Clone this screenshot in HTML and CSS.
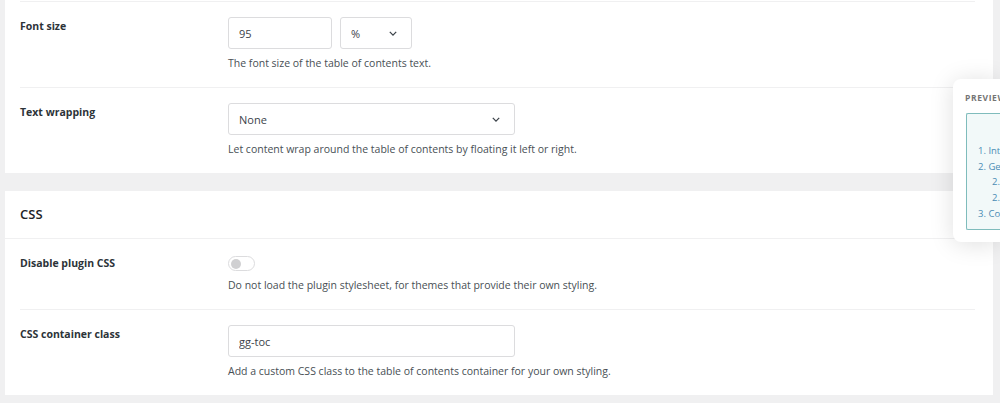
FILE: index.html
```html
<!DOCTYPE html>
<html>
<head>
    <link rel="stylesheet" href="styles.css">
</head>
<body>
    <div class="settings">
        <!-- Ajustes de apariencia -->
        <div class="card">
            <div class="row">
                <div class="label">Font size</div>
                <div class="field">
                    <div class="inline">
                        <input class="input input-num" type="text" value="95">
                        <div class="select select-unit">
                            <span>%</span>
                            <svg class="chevron" viewBox="0 0 10 6" width="8" height="5"><path d="M1 1l4 4 4-4" fill="none" stroke="#3c434a" stroke-width="1.6"/></svg>
                        </div>
                    </div>
                    <p class="help">The font size of the table of contents text.</p>
                </div>
            </div>
            <div class="row">
                <div class="label">Text wrapping</div>
                <div class="field">
                    <div class="select select-wide">
                        <span>None</span>
                        <svg class="chevron" viewBox="0 0 10 6" width="8" height="5"><path d="M1 1l4 4 4-4" fill="none" stroke="#3c434a" stroke-width="1.6"/></svg>
                    </div>
                    <p class="help">Let content wrap around the table of contents by floating it left or right.</p>
                </div>
            </div>
        </div>

        <!-- Ajustes de CSS -->
        <div class="card">
            <div class="card-header">CSS</div>
            <div class="row">
                <div class="label">Disable plugin CSS</div>
                <div class="field">
                    <span class="toggle"><span class="knob"></span></span>
                    <p class="help">Do not load the plugin stylesheet, for themes that provide their own styling.</p>
                </div>
            </div>
            <div class="row">
                <div class="label">CSS container class</div>
                <div class="field">
                    <input class="input input-wide" type="text" value="gg-toc">
                    <p class="help">Add a custom CSS class to the table of contents container for your own styling.</p>
                </div>
            </div>
        </div>
    </div>

    <!-- Vista previa flotante -->
    <div class="preview">
        <div class="preview-title">PREVIEW</div>
        <div class="toc">
            <ol class="toc-list">
                <li>1. Intro</li>
                <li>2. Get
                    <ol class="toc-sub">
                        <li>2.1</li>
                        <li>2.2</li>
                    </ol>
                </li>
                <li>3. Con</li>
            </ol>
        </div>
    </div>
</body>
</html>
```

FILE: styles.css
```css
/* Estilos generales */
body {
    margin: 0;
    background-color: #f0f0f1;
    font-family: "Open Sans", "Noto Sans", sans-serif;
    color: #2c3338;
    overflow: hidden;
}

.settings {
    padding: 0 7px 0 5px;
}

/* Tarjetas */
.card {
    background-color: #fff;
    margin-bottom: 18px;
}

.card:first-child {
    padding-top: 1px;
}

.card-header {
    height: 47px;
    line-height: 47px;
    padding: 0 15px;
    font-size: 13px;
    font-weight: 600;
    color: #1d2327;
    border-bottom: 1px solid #f0f0f1;
}

/* Filas de ajustes */
.row {
    display: grid;
    grid-template-columns: 208px 1fr;
    margin: 0 18px 0 15px;
    padding: 15px 0 16px;
    border-top: 1px solid #f0f0f1;
}

.card-header + .row {
    border-top: none;
}

.label {
    padding-top: 2px;
    font-size: 10.5px;
    line-height: 15px;
    font-weight: 700;
    color: #2c3338;
}

.field {
    min-width: 0;
}

.inline {
    display: flex;
    gap: 8px;
}

.help {
    margin: 7px 0 0;
    font-size: 10.5px;
    line-height: 15px;
    color: #484f55;
}

/* Campos de entrada */
.input,
.select {
    box-sizing: border-box;
    height: 32px;
    padding: 0 10px;
    border: 1px solid #dcdcde;
    border-radius: 3px;
    background-color: #fff;
    font-family: inherit;
    font-size: 11px;
    color: #3c434a;
}

.input {
    display: block;
    outline: none;
}

.input-num {
    width: 104px;
}

.input-wide,
.select-wide {
    width: 287px;
}

.select {
    display: flex;
    align-items: center;
    justify-content: space-between;
    padding-right: 14px;
}

.select-unit {
    width: 72px;
}

/* Interruptor */
.toggle {
    display: block;
    box-sizing: border-box;
    width: 27px;
    height: 15px;
    margin-top: 2px;
    border: 1px solid #dcdcde;
    border-radius: 8px;
    position: relative;
}

.knob {
    position: absolute;
    left: 2px;
    top: 1.5px;
    width: 10px;
    height: 10px;
    border-radius: 50%;
    background-color: #d0d0d2;
}

/* Panel de vista previa */
.preview {
    position: absolute;
    left: 953px;
    top: 79px;
    width: 47px;
    height: 163px;
    box-sizing: border-box;
    padding: 12px 0 0 12px;
    background-color: #fff;
    border-radius: 8px 0 0 8px;
    box-shadow: 0 2px 24px rgba(0, 0, 0, 0.13);
    overflow: hidden;
    white-space: nowrap;
}

.preview-title {
    font-size: 8.5px;
    font-weight: 700;
    letter-spacing: 0.6px;
    color: #757575;
    line-height: 14px;
}

.toc {
    margin: 8px 0 0 1px;
    height: 117px;
    box-sizing: border-box;
    padding: 29px 0 0 11px;
    border: 1px solid #7fbcbc;
    border-right: none;
    border-radius: 2px 0 0 2px;
    background-color: #f2f9f9;
}

.toc-list,
.toc-sub {
    list-style: none;
    margin: 0;
    padding: 0;
    font-size: 9.5px;
    line-height: 15.7px;
    color: #4a8db5;
}

.toc-sub {
    padding-left: 14px;
}
```
